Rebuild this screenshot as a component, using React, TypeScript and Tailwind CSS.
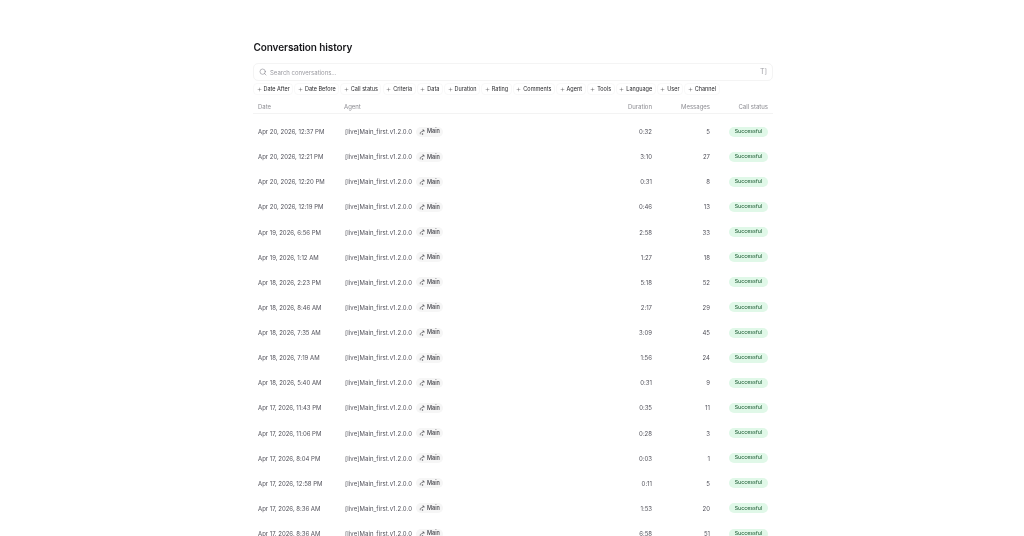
import { Search, Plus } from "lucide-react";

const filters = ["Date After", "Date Before", "Call status", "Criteria", "Data", "Duration", "Rating", "Comments", "Agent", "Tools", "Language", "User", "Channel"];

const rows = [
  ["Apr 20, 2026, 12:37 PM", "0:32", "5"],
  ["Apr 20, 2026, 12:21 PM", "3:10", "27"],
  ["Apr 20, 2026, 12:20 PM", "0:31", "8"],
  ["Apr 20, 2026, 12:19 PM", "0:46", "13"],
  ["Apr 19, 2026, 6:56 PM", "2:58", "33"],
  ["Apr 19, 2026, 1:12 AM", "1:27", "18"],
  ["Apr 18, 2026, 2:23 PM", "5:18", "52"],
  ["Apr 18, 2026, 8:46 AM", "2:17", "29"],
  ["Apr 18, 2026, 7:35 AM", "3:09", "45"],
  ["Apr 18, 2026, 7:19 AM", "1:56", "24"],
  ["Apr 18, 2026, 5:40 AM", "0:31", "9"],
  ["Apr 17, 2026, 11:43 PM", "0:35", "11"],
  ["Apr 17, 2026, 11:06 PM", "0:28", "3"],
  ["Apr 17, 2026, 8:04 PM", "0:03", "1"],
  ["Apr 17, 2026, 12:58 PM", "0:11", "5"],
  ["Apr 17, 2026, 8:36 AM", "1:53", "20"],
  ["Apr 17, 2026, 8:36 AM", "6:58", "51"],
];

function BranchIcon() {
  return (
    <svg viewBox="0 0 24 24" fill="none" stroke="currentColor" strokeWidth={2.4} className="h-[6px] w-[6px]">
      <path d="M5 21V15" />
      <path d="M5 15C5 10 19 12 19 4" />
      <path d="M13 4h7v7" />
      <circle cx="14" cy="20" r="2" />
    </svg>
  );
}

export default function App() {
  return (
    <div className="h-[536px] overflow-hidden bg-white font-['Inter',sans-serif] text-[#18181b] antialiased blur-[0.3px]">
      <div className="ml-[253px] w-[520px] pt-[41px]">
        <h1 className="h-[12px] pl-[0.5px] text-[10px] leading-[12px] font-semibold tracking-[-0.1px]">Conversation history</h1>
        <div className="mt-[10px] flex h-[18px] items-center rounded-[5px] border border-[#f4f4f4] pr-[5px] pl-[5px]">
          <Search className="h-[8px] w-[8px] text-[#71717a]" strokeWidth={1.5} />
          <span className="ml-[3px] flex-1 text-[6px] text-[#9a9aa0]">Search conversations...</span>
          <span className="text-[7px] text-[#a0a0a6]">T]</span>
        </div>
        <div className="mt-[2px] flex h-[12px] items-center gap-[1.2px]">
          {filters.map((f) => (
            <div key={f} className="flex h-[12px] items-center gap-[2px] rounded-[4px] border border-[#f9f9f9] px-[2.5px] text-[5.5px] whitespace-nowrap text-[#27272a]">
              <Plus className="h-[5px] w-[5px]" strokeWidth={1.5} />
              {f}
            </div>
          ))}
        </div>
        <div className="flex h-[19px] items-start border-b border-[#f3f3f3] pt-[8px] text-[6px] leading-[7px] text-[#8c8c92]">
          <div className="w-[91px] pl-[5px]">Date</div>
          <div className="flex-1">Agent</div>
          <div className="w-[50px] text-right">Duration</div>
          <div className="w-[58px] text-right">Messages</div>
          <div className="w-[63px] pr-[5px] text-right">Call status</div>
        </div>
        <div className="pt-[5px]">
          {rows.map((r, i) => (
            <div key={i} className="flex h-[25.13px] items-center text-[6px] text-[#52525b]">
              <div className="w-[91px] pl-[5px]">{r[0]}</div>
              <div className="flex flex-1 items-center pl-[1px]">
                <span className="tracking-[0.08px]">[live]Main_first.v1.2.0.0</span>
                <span className="ml-[4px] flex h-[10px] w-[27px] items-center gap-[2px] rounded-full bg-[#f6f6f6] pl-[3px] text-[5.5px] font-medium text-[#3f3f46]">
                  <BranchIcon />
                  Main
                </span>
              </div>
              <div className="w-[50px] text-right">{r[1]}</div>
              <div className="w-[58px] text-right">{r[2]}</div>
              <div className="flex w-[63px] justify-end pr-[5px]">
                <span className="flex h-[10px] w-[39px] items-center justify-center rounded-full bg-[#e0f8e8] text-[5.2px] font-medium text-[#2f6b45]">Successful</span>
              </div>
            </div>
          ))}
        </div>
      </div>
    </div>
  );
}
